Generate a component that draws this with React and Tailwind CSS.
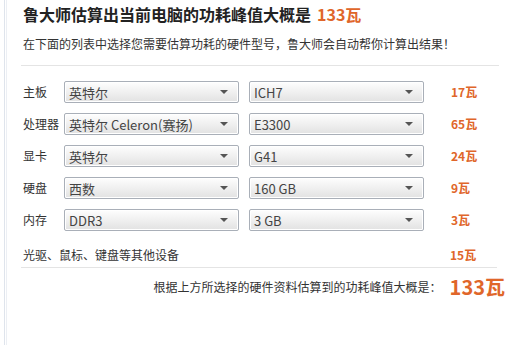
const rows = [
  { label: '主板', brand: '英特尔', model: 'ICH7', watt: '17瓦' },
  { label: '处理器', brand: '英特尔 Celeron(赛扬)', model: 'E3300', watt: '65瓦' },
  { label: '显卡', brand: '英特尔', model: 'G41', watt: '24瓦' },
  { label: '硬盘', brand: '西数', model: '160 GB', watt: '9瓦' },
  { label: '内存', brand: 'DDR3', model: '3 GB', watt: '3瓦' },
];

function FakeSelect({ value }) {
  return (
    <div className="w-[175px] h-[22px] border border-[#a9afb8] rounded-[2px] bg-gradient-to-b from-[#fefefe] to-[#e2e2e2] flex items-center justify-between pl-[4px] pr-[10px] shadow-[inset_0_0_0_1px_#ffffff]">
      <span className="text-[13px] text-[#444] leading-none">{value}</span>
      <svg width="8" height="4" viewBox="0 0 8 4"><path d="M0 0h8L4 4z" fill="#555" /></svg>
    </div>
  );
}

export default function App() {
  return (
    <div className="w-[511px] h-[345px] bg-white overflow-hidden" style={{ fontFamily: '"Noto Sans CJK SC", "Noto Sans", sans-serif' }}>
      <div className="ml-[4px] h-full border-l border-[#dfe4ec]">
        <div className="ml-[1px] h-full border-l border-[#eceff4] pl-[16px] pr-[12px]">
          <h1 className="pt-[3px] h-[24px] text-[16px] font-bold text-[#222] leading-[22px] flex items-baseline">
            鲁大师估算出当前电脑的功耗峰值大概是<span className="ml-[6px] text-[#e0662a]">133瓦</span>
          </h1>
          <p className="mt-[11px] text-[12px] text-[#333] leading-[18px]">在下面的列表中选择您需要估算功耗的硬件型号，鲁大师会自动帮你计算出结果！</p>
          <div className="mt-[12px] -ml-[2px] border-t border-[#e4e4e4]" />
          <div className="pt-[15px] flex flex-col gap-[10px]">
            {rows.map((r) => (
              <div key={r.label} className="flex items-center h-[22px]">
                <span className="w-[41px] text-[12px] text-[#333]">{r.label}</span>
                <FakeSelect value={r.brand} />
                <div className="w-[10px]" />
                <FakeSelect value={r.model} />
                <span className="ml-[27px] text-[12px] font-bold text-[#e0662a]">{r.watt}</span>
              </div>
            ))}
          </div>
          <div className="mt-[13px] flex items-center h-[22px]">
            <span className="w-[427px] text-[12px] text-[#333]">光驱、鼠标、键盘等其他设备</span>
            <span className="text-[12px] font-bold text-[#e0662a]">15瓦</span>
          </div>
          <div className="mt-[1px] -ml-[2px] w-[476px] border-t border-[#e4e4e4]" />
          <div className="mt-[6px] flex items-center justify-end">
            <span className="text-[12px] text-[#333]">根据上方所选择的硬件资料估算到的功耗峰值大概是：</span>
            <span className="ml-[8px] -mr-[6px] text-[20px] font-bold text-[#e0662a] leading-[26px]">133瓦</span>
          </div>
        </div>
      </div>
    </div>
  );
}
